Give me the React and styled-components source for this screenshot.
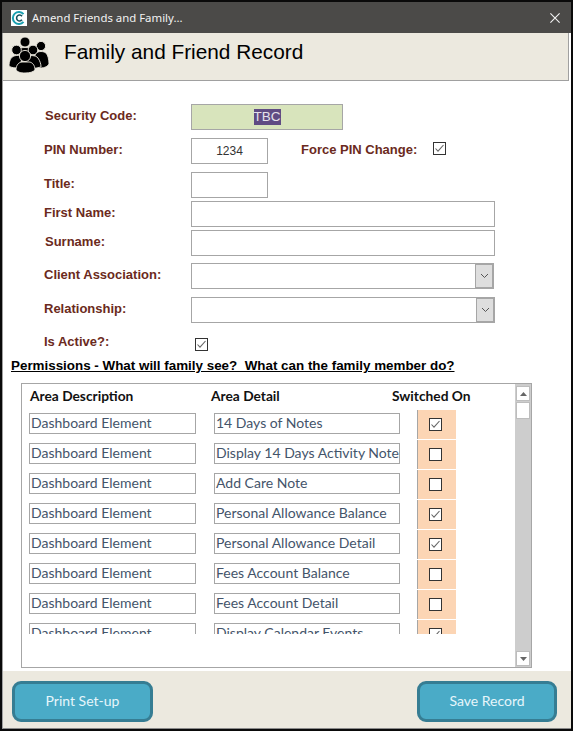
import React from "react";
import styled, { createGlobalStyle } from "styled-components";

const Global = createGlobalStyle`
  html, body { margin: 0; padding: 0; background: #fff; }
  * { box-sizing: border-box; }
`;

const Win = styled.div`
  width: 573px; height: 731px; display: flex; flex-direction: column;
  border: 2px solid #0a0a0a; background: #fff; overflow: hidden;
`;
const TitleBar = styled.div`
  height: 31px; flex: none; background: #4b4a48; display: flex; align-items: center;
  padding: 0 9px; color: #f2f2f2; font: 11.4px "Noto Sans", sans-serif;
`;
const AppIcon = styled.svg`width: 16px; height: 16px; flex: none; margin-right: 5px;`;
const TitleText = styled.span`flex: 1;`;
const CloseIcon = styled.svg`width: 10px; height: 10px; flex: none; margin-right: 2px;`;
const Body = styled.div`
  flex: 1; display: flex; flex-direction: column; min-height: 0;
  border-left: 1px solid #a0a0a0; border-bottom: 1px solid #8a8a8a;
`;
const Header = styled.div`
  height: 48px; flex: none; display: flex; align-items: center; background: #ece9df;
  border-bottom: 1px solid #a0a0a0; border-right: 1px solid #a0a0a0; padding-left: 6px; margin-right: 2px;
`;
const PeopleIcon = styled.svg`width: 40px; height: 36px; flex: none; margin-right: 15px; margin-bottom: 3px;`;
const Heading = styled.h1`
  margin: 0 0 10px; font: 400 20.8px "Liberation Sans", Arial, sans-serif; color: #000;
`;
const Main = styled.div`
  flex: 1; min-height: 0; display: flex; flex-direction: column; padding: 23px 0 3px 8px;
`;
const Row = styled.div`
  display: flex; flex: none; align-items: flex-start; height: ${p => p.$h || 26}px; margin-top: ${p => p.$top || 0}px;
`;
const Label = styled.label`
  width: ${p => p.$w || 180}px; flex: none; height: 24px;
  padding-left: ${p => p.$x || 33}px;
  font: 700 13px/24px "Liberation Sans", Arial, sans-serif; color: #6b2a20; white-space: nowrap;
`;
const Field = styled.div`
  width: ${p => p.$w}px; height: 26px; flex: none; display: flex; align-items: center; justify-content: center;
  border: 1px solid #a6a6a6; background: ${p => p.$bg || "#fff"};
  font: 12px "Liberation Sans", Arial, sans-serif; color: #333;
`;
const Selected = styled.span`background: #5f4b83; color: #e4e0ea; font-size: 13.5px; line-height: 16px;`;
const SelectField = styled(Field)`justify-content: flex-end;`;
const SelectBtn = styled.div`
  width: 18px; height: 100%; background: #dedede; border: 1px solid #a6a6a6;
  display: flex; align-items: center; justify-content: center;
`;
const Chevron = styled.svg`width: 9px; height: 6px;`;
const CheckMark = styled.div`
  width: 13px; height: 13px; flex: none; border: 1px solid #333; background: #fff;
  display: flex; align-items: center; justify-content: center;
  margin: ${p => p.$m || "0"};
`;
const CheckSvg = styled.svg`width: 11px; height: 11px; display: block;`;
const SectionTitle = styled.div`
  flex: none; margin: 5px 0 0 0; font: 700 13.4px/18px "Liberation Sans", Arial, sans-serif; color: #000;
  text-decoration: underline; height: 18px; white-space: nowrap;
`;
const Panel = styled.div`
  margin: 8px 0 0 10px; width: 511px; height: 285px; flex: none; border: 1px solid #a6a6a6;
  display: flex;
`;
const Content = styled.div`flex: 1; min-width: 0; display: flex; flex-direction: column;`;
const ColHeads = styled.div`
  height: 25px; flex: none; display: flex; align-items: center; padding: 0 0 2px 8px;
  font: 700 13.75px "Lato", sans-serif; color: #111;
`;
const ColHead = styled.div`width: ${p => p.$w}px; flex: none;`;
const Clip = styled.div`height: 225px; overflow: hidden; flex: none;`;
const DataRow = styled.div`display: flex; height: 30px; align-items: flex-start; padding-left: 7px;`;
const DataCell = styled.div`
  width: ${p => p.$w}px; height: 21px; margin: 4px ${p => p.$gap}px 0 0; flex: none; overflow: hidden; white-space: nowrap;
  border: 1px solid #a6a6a6; padding: 0 0 0 1px;
  font: 14px/18px "Lato", sans-serif; color: #44546a;
`;
const SwitchCell = styled.div`
  width: 39px; height: 29px; margin-top: 1px; flex: none; background: #fcd5b4; border-left: 1px solid #a6a6a6;
  display: flex; align-items: center; justify-content: center; padding: 0 3px 1px 0;
`;
const Scrollbar = styled.div`
  width: 16px; flex: none; background: #cdcdcd; display: flex; flex-direction: column; padding: 2px 1px 1px;
`;
const ScrollBtn = styled.div`
  height: 15px; flex: none; background: #fff; border: 1px solid #bdbdbd;
  display: flex; align-items: center; justify-content: center;
`;
const Arrow = styled.svg`width: 7px; height: 4px;`;
const Thumb = styled.div`height: 17px; flex: none; margin-top: 1px; background: #fff; border: 1px solid #bdbdbd;`;
const Spacer = styled.div`flex: 1;`;
const Footer = styled.div`
  height: 57px; flex: none; background: #ece9df; display: flex; justify-content: space-between; align-items: flex-start;
  padding: 10px 14px 0 9px;
`;
const Btn = styled.div`
  width: ${p => p.$w}px; height: 41px; border: 3px solid #367d93; border-radius: 9px; background: #4aabc7;
  display: flex; align-items: center; justify-content: center; padding-bottom: 2px;
  font: 14px "Lato", sans-serif; color: #e6f6fb;
`;

const Check = () => (
  <CheckSvg viewBox="0 0 11 11"><path d="M1.5 5.5L4 8.2L9.5 2" fill="none" stroke="#666" strokeWidth="1.1" /></CheckSvg>
);
const Down = () => (
  <Chevron viewBox="0 0 9 6"><path d="M1 1l3.5 3.5L8 1" fill="none" stroke="#555" strokeWidth="1" /></Chevron>
);

const rows = [
  ["14 Days of Notes", true],
  ["Display 14 Days Activity Notes", false],
  ["Add Care Note", false],
  ["Personal Allowance Balance", true],
  ["Personal Allowance Detail", true],
  ["Fees Account Balance", false],
  ["Fees Account Detail", false],
  ["Display Calendar Events", true],
];

export default function App() {
  return (
    <Win>
      <Global />
      <TitleBar>
        <AppIcon viewBox="0 0 16 16">
          <rect width="16" height="16" fill="#fff" />
          <path d="M12.5 4.2A6 6 0 1 0 12.5 11.8" fill="none" stroke="#1a9fb0" strokeWidth="2" />
          <path d="M11 6.2A3 3 0 1 0 11 9.8" fill="none" stroke="#16505c" strokeWidth="1.6" />
        </AppIcon>
        <TitleText>Amend Friends and Family...</TitleText>
        <CloseIcon viewBox="0 0 10 10"><path d="M.4.4l9.2 9.2M9.6.4L.4 9.6" stroke="#f4f4f4" strokeWidth="1.1" /></CloseIcon>
      </TitleBar>
      <Body>
        <Header>
          <PeopleIcon viewBox="0 0 40 36">
            <g fill="#000" stroke="#ece9df" strokeWidth="0.9">
              <circle cx="32" cy="9" r="4.6" />
              <path d="M27 16c3-2 7-2 10 0 2 2 3 7 3 11-1 2-4 4-8 4H26V18z" />
              <path d="M0 29c0-5 2-9 5-10 3-1 6-1 8 1l-2 11c-4 0-9 0-11-2z" />
              <circle cx="16" cy="5" r="5" />
              <path d="M9 12c3-2 11-2 14 0l-2 6H11z" />
              <circle cx="7.5" cy="13" r="4.8" />
              <circle cx="24" cy="13" r="4.8" />
              <path d="M17 20c3-2 10-2 12 1 2 3 3 6 3 9l-9 2-6-6z" />
              <circle cx="16" cy="19" r="5.6" />
              <path d="M7 33c0-5 3-8 6-8h7c3 0 6 3 6 8-2 2-5 3-10 3s-7-1-9-3z" />
            </g>
          </PeopleIcon>
          <Heading>Family and Friend Record</Heading>
        </Header>
        <Main>
          <Row>
            <Label $x={34}>Security Code:</Label>
            <Field $w={152} $bg="#d8e4bc"><Selected>TBC</Selected></Field>
          </Row>
          <Row $top={8}>
            <Label>PIN Number:</Label>
            <Field $w={77}>1234</Field>
            <Label $w={165}>Force PIN Change:</Label>
            <CheckMark $m="4px 0 0 0"><Check /></CheckMark>
          </Row>
          <Row $top={8}><Label>Title:</Label><Field $w={77} /></Row>
          <Row $top={3}><Label>First Name:</Label><Field $w={304} /></Row>
          <Row $top={3}><Label $x={34}>Surname:</Label><Field $w={304} /></Row>
          <Row $top={7}>
            <Label>Client Association:</Label>
            <SelectField $w={303}><SelectBtn><Down /></SelectBtn></SelectField>
          </Row>
          <Row $top={8}>
            <Label>Relationship:</Label>
            <SelectField $w={304}><SelectBtn><Down /></SelectBtn></SelectField>
          </Row>
          <Row $top={7} $h={22}>
            <Label>Is Active?:</Label>
            <CheckMark $m="8px 0 0 4px"><Check /></CheckMark>
          </Row>
          <SectionTitle>Permissions - What will family see?&nbsp; What can the family member do?</SectionTitle>
          <Panel>
            <Content>
              <ColHeads>
                <ColHead $w={181}>Area Description</ColHead>
                <ColHead $w={181}>Area Detail</ColHead>
                <ColHead $w={90}>Switched On</ColHead>
              </ColHeads>
              <Clip>
                {rows.map(([d, on]) => (
                  <DataRow key={d}>
                    <DataCell $w={167} $gap={18}>Dashboard Element</DataCell>
                    <DataCell $w={186} $gap={17}>{d}</DataCell>
                    <SwitchCell><CheckMark>{on && <Check />}</CheckMark></SwitchCell>
                  </DataRow>
                ))}
              </Clip>
            </Content>
            <Scrollbar>
              <ScrollBtn><Arrow viewBox="0 0 7 4"><path d="M3.5 0L7 4H0z" fill="#666" /></Arrow></ScrollBtn>
              <Thumb />
              <Spacer />
              <ScrollBtn><Arrow viewBox="0 0 7 4"><path d="M0 0h7L3.5 4z" fill="#666" /></Arrow></ScrollBtn>
            </Scrollbar>
          </Panel>
        </Main>
        <Footer>
          <Btn $w={141}>Print Set-up</Btn>
          <Btn $w={140}>Save Record</Btn>
        </Footer>
      </Body>
    </Win>
  );
}
